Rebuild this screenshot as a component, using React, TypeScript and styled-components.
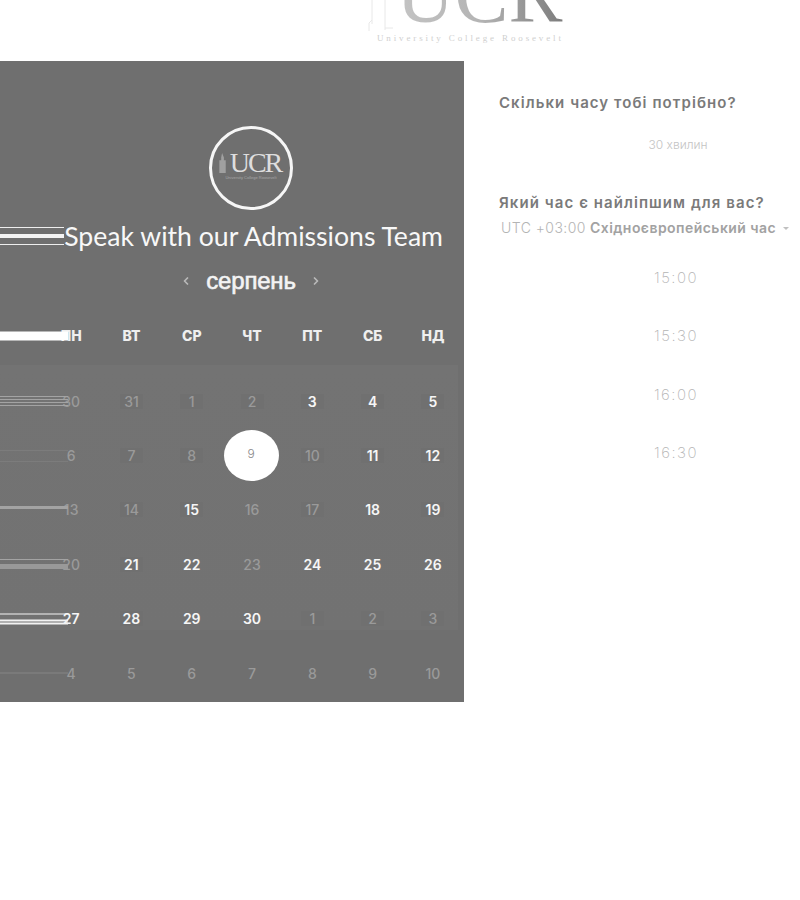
import styled, { createGlobalStyle } from 'styled-components';
import { ChevronLeft, ChevronRight } from 'lucide-react';

type StripeSpec = [number, string, number?];

interface DaySpec {
  value: number;
  active?: boolean;
  patch?: boolean;
  selected?: boolean;
  stripes?: StripeSpec[];
}

const GlobalStyle = createGlobalStyle`
  html, body {
    margin: 0;
    padding: 0;
    background: #ffffff;
  }
  body {
    font-family: Inter, "Liberation Sans", Arial, sans-serif;
  }
`;

const WEEKDAYS = ['ПН', 'ВТ', 'СР', 'ЧТ', 'ПТ', 'СБ', 'НД'];
const SLOTS = ['15:00', '15:30', '16:00', '16:30'];

const GREY = '#a3a3a3';

const ROWS: DaySpec[][] = [
  [
    { value: 30, stripes: [[1, GREY], [1, GREY, 2], [1, GREY, 2], [1, GREY, 2]] },
    { value: 31, patch: true },
    { value: 1, patch: true },
    { value: 2, patch: true },
    { value: 3, active: true, patch: true },
    { value: 4, active: true, patch: true },
    { value: 5, active: true, patch: true },
  ],
  [
    { value: 6, stripes: [[1, '#7c7c7c'], [1, '#7c7c7c', 10]] },
    { value: 7, patch: true },
    { value: 8, patch: true },
    { value: 9, selected: true },
    { value: 10, patch: true },
    { value: 11, active: true, patch: true },
    { value: 12, active: true, patch: true },
  ],
  [
    { value: 13, stripes: [[3, GREY], [0, 'transparent', 5]] },
    { value: 14, patch: true },
    { value: 15, active: true, patch: true },
    { value: 16 },
    { value: 17, patch: true },
    { value: 18, active: true },
    { value: 19, active: true, patch: true },
  ],
  [
    { value: 20, stripes: [[1, GREY], [5, '#999999', 4]] },
    { value: 21, active: true, patch: true },
    { value: 22, active: true },
    { value: 23 },
    { value: 24, active: true },
    { value: 25, active: true },
    { value: 26, active: true },
  ],
  [
    { value: 27, active: true, stripes: [[1, '#f4f4f4'], [2, '#f4f4f4', 5], [2, '#f4f4f4', 1]] },
    { value: 28, active: true, patch: true },
    { value: 29, active: true },
    { value: 30, active: true },
    { value: 1, patch: true },
    { value: 2, patch: true },
    { value: 3, patch: true },
  ],
  [
    { value: 4, stripes: [[1, '#858585']] },
    { value: 5 },
    { value: 6 },
    { value: 7 },
    { value: 8 },
    { value: 9 },
    { value: 10 },
  ],
];

const Page = styled.div`
  width: 800px;
  height: 900px;
  overflow: hidden;
  background: #ffffff;
`;

const TopLogo = styled.header`
  position: relative;
  height: 61px;
  overflow: hidden;
  padding-left: 377px;
`;

const LogoLetters = styled.div`
  margin: -35px 0 0 19px;
  width: 168px;
  height: 60px;
  font-family: "Liberation Serif", "Times New Roman", serif;
  font-size: 81px;
  line-height: 60px;
  white-space: nowrap;
  color: transparent;
  background: linear-gradient(90deg, #c4c4c4 0%, #b4b4b4 50%, #7c7c7c 100%);
  -webkit-background-clip: text;
  background-clip: text;
`;

const LogoCaption = styled.div`
  margin-top: 8px;
  font-family: "Liberation Serif", "Times New Roman", serif;
  font-size: 9px;
  line-height: 11px;
  letter-spacing: 2.87px;
  white-space: nowrap;
  color: #cfcfcf;
`;

const TowerSketch = styled.svg`
  position: absolute;
  left: 368px;
  top: 0;
`;

const Layout = styled.main`
  display: flex;
  align-items: flex-start;
`;

const Panel = styled.section`
  width: 464px;
  height: 641px;
  flex: none;
  padding-top: 65px;
  box-sizing: border-box;
  background: #6f6f6f;
  color: #ffffff;
`;

const Crest = styled.div`
  width: 84px;
  height: 84px;
  margin-left: 209px;
  padding-bottom: 4px;
  box-sizing: border-box;
  border: 3px solid #f6f6f6;
  border-radius: 50%;
  display: flex;
  flex-direction: column;
  align-items: center;
  justify-content: center;
`;

const CrestMark = styled.div`
  display: flex;
  align-items: flex-end;
  gap: 2px;
  height: 20px;
  margin-left: -3px;
`;

const CrestLetters = styled.span`
  font-family: "Liberation Serif", "Times New Roman", serif;
  font-size: 28px;
  line-height: 20px;
  letter-spacing: -2.1px;
  color: #dedede;
`;

const CrestCaption = styled.span`
  margin-top: 2px;
  font-family: "Liberation Sans", Arial, sans-serif;
  font-size: 4px;
  line-height: 5px;
  white-space: nowrap;
  color: #a8a8a8;
`;

const TitleRow = styled.div`
  display: flex;
  align-items: center;
  margin-top: 9px;
  padding-right: 21px;
  height: 34px;
`;

const Title = styled.h1`
  margin: 0 0 0 auto;
  font-family: Lato, "Liberation Sans", sans-serif;
  font-size: 26.6px;
  line-height: 34px;
  font-weight: 400;
  white-space: nowrap;
  color: #f8f8f8;
`;

const StreakStack = styled.div<{ $width: number }>`
  width: ${(p) => p.$width}px;
  flex: none;
  display: flex;
  flex-direction: column;
`;

const Stripe = styled.i<{ $height: number; $color: string; $gap: number }>`
  display: block;
  height: ${(p) => p.$height}px;
  margin-top: ${(p) => p.$gap}px;
  background: ${(p) => p.$color};
`;

const CellStreak = styled.div`
  position: absolute;
  left: -41px;
  top: 50%;
  transform: translateY(-50%);
`;

const MonthRow = styled.div`
  display: flex;
  align-items: center;
  justify-content: center;
  gap: 14px;
  height: 30px;
  margin-top: 13px;
  padding-left: 38px;
  color: #b9b9b9;
`;

const MonthName = styled.h2`
  margin: 0;
  font-family: "Liberation Sans", Arial, sans-serif;
  font-size: 24px;
  line-height: 30px;
  font-weight: 400;
  letter-spacing: -0.2px;
  color: #f4f4f4;
  -webkit-text-stroke: 0.6px #f4f4f4;
`;

const Weekdays = styled.div`
  display: grid;
  grid-template-columns: repeat(7, 60.3px);
  height: 20px;
  margin-top: 30px;
  padding-left: 41px;
`;

const Weekday = styled.div`
  position: relative;
  text-align: center;
  font-size: 14px;
  line-height: 20px;
  font-weight: 800;
  color: #efefef;
`;

const DaysArea = styled.div`
  margin-top: 19px;
  padding: 9px 0 0 41px;
  background: linear-gradient(#737373, #727272) no-repeat 0 0 / 458px 265px;
`;

const DaysRow = styled.div`
  display: grid;
  grid-template-columns: repeat(7, 60.3px);
  height: 54.4px;
`;

const DayCell = styled.div`
  position: relative;
  display: flex;
  align-items: center;
  justify-content: center;
`;

const DayNumber = styled.span<{ $active?: boolean; $patch?: boolean }>`
  min-width: 23px;
  padding: 0 1px;
  box-sizing: border-box;
  text-align: center;
  font-size: 14px;
  line-height: 15px;
  font-weight: ${(p) => (p.$active ? 600 : 500)};
  color: ${(p) => (p.$active ? '#f6f6f6' : '#9a9a9a')};
  background: ${(p) => (p.$patch ? '#707070' : 'transparent')};
`;

const SelectedDay = styled.span`
  width: 55px;
  height: 51px;
  margin-left: -2px;
  border-radius: 50%;
  background: #ffffff;
  display: flex;
  align-items: center;
  justify-content: center;
  padding-bottom: 5px;
  box-sizing: border-box;
  font-size: 12px;
  font-weight: 300;
  color: #8a8a8a;
`;

const Side = styled.aside`
  width: 336px;
  padding: 32px 0 0 35px;
  box-sizing: border-box;
`;

const Question = styled.h3`
  margin: 0;
  font-size: 15px;
  line-height: 20px;
  font-weight: 600;
  letter-spacing: 1.07px;
  white-space: nowrap;
  color: #7a7a7a;
`;

const Duration = styled.div`
  width: 358px;
  margin: 24px 0 40px;
  text-align: center;
  font-size: 12px;
  line-height: 16px;
  font-weight: 300;
  color: #c4c4c4;
`;

const Zone = styled.div`
  display: flex;
  align-items: center;
  margin-top: 5px;
  padding-left: 2px;
  font-size: 14px;
  line-height: 20px;
  font-weight: 300;
  letter-spacing: 0.45px;
  white-space: nowrap;
  color: #b4b4b4;
`;

const ZoneName = styled.span`
  margin-left: 4px;
  font-weight: 600;
  color: #a2a2a2;
`;

const ZoneCaret = styled.i`
  width: 0;
  height: 0;
  margin: 1px 0 0 7px;
  border-left: 3px solid transparent;
  border-right: 3px solid transparent;
  border-top: 3px solid #c0c0c0;
`;

const Slots = styled.ul`
  list-style: none;
  margin: 30px 0 0;
  padding: 0;
  width: 354px;
`;

const Slot = styled.li`
  height: 58.4px;
  text-align: center;
  font-size: 15px;
  line-height: 20px;
  font-weight: 200;
  letter-spacing: 1.5px;
  color: #b4b4b4;
`;

const Streak = ({ width, stripes }: { width: number; stripes: StripeSpec[] }) => (
  <StreakStack $width={width}>
    {stripes.map(([height, color, gap], index) => (
      <Stripe key={index} $height={height} $color={color} $gap={gap ?? 0} />
    ))}
  </StreakStack>
);

const App = () => {
  return (
    <Page>
      <GlobalStyle />
      <TopLogo>
        <TowerSketch width="26" height="34" viewBox="0 0 26 34" fill="none" stroke="#e8e8e8">
          <path d="M4 0v24M17 0v30M4 20l-3 3v8M17 28h8" />
        </TowerSketch>
        <LogoLetters>UCR</LogoLetters>
        <LogoCaption>University College Roosevelt</LogoCaption>
      </TopLogo>
      <Layout>
        <Panel>
          <Crest>
            <CrestMark>
              <svg width="10" height="20" viewBox="0 0 10 22" fill="#a0a0a0">
                <path d="M4 0l2 5v3h2v14H1V8h2V5z" />
              </svg>
              <CrestLetters>UCR</CrestLetters>
            </CrestMark>
            <CrestCaption>University College Roosevelt</CrestCaption>
          </Crest>
          <TitleRow>
            <Streak
              width={64}
              stripes={[
                [1, '#eeeeee'],
                [4, '#f4f4f4', 6],
                [1, '#eeeeee', 6],
              ]}
            />
            <Title>Speak with our Admissions Team</Title>
          </TitleRow>
          <MonthRow>
            <ChevronLeft size={12} strokeWidth={3.5} />
            <MonthName>серпень</MonthName>
            <ChevronRight size={12} strokeWidth={3.5} />
          </MonthRow>
          <Weekdays>
            {WEEKDAYS.map((day, index) => (
              <Weekday key={day}>
                {day}
                {index === 0 && (
                  <CellStreak>
                    <Streak width={68} stripes={[[9, '#ffffff']]} />
                  </CellStreak>
                )}
              </Weekday>
            ))}
          </Weekdays>
          <DaysArea>
            {ROWS.map((row, rowIndex) => (
              <DaysRow key={rowIndex}>
                {row.map((day) => (
                  <DayCell key={day.value}>
                    {day.selected ? (
                      <SelectedDay>{day.value}</SelectedDay>
                    ) : (
                      <DayNumber $active={day.active} $patch={day.patch}>
                        {day.value}
                      </DayNumber>
                    )}
                    {day.stripes && (
                      <CellStreak>
                        <Streak width={68} stripes={day.stripes} />
                      </CellStreak>
                    )}
                  </DayCell>
                ))}
              </DaysRow>
            ))}
          </DaysArea>
        </Panel>
        <Side>
          <Question>Скільки часу тобі потрібно?</Question>
          <Duration>30 хвилин</Duration>
          <Question>Який час є найліпшим для вас?</Question>
          <Zone>
            UTC +03:00
            <ZoneName>Східноєвропейський час</ZoneName>
            <ZoneCaret />
          </Zone>
          <Slots>
            {SLOTS.map((slot) => (
              <Slot key={slot}>{slot}</Slot>
            ))}
          </Slots>
        </Side>
      </Layout>
    </Page>
  );
};

export default App;
